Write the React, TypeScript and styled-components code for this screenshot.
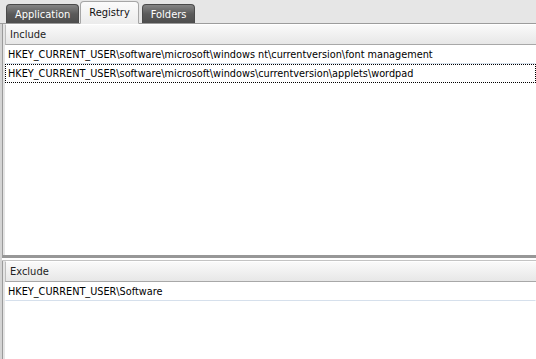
import * as React from 'react';
import styled, { createGlobalStyle } from 'styled-components';

const GlobalStyle = createGlobalStyle`
    html, body {
        margin: 0;
        padding: 0;
        background: #ffffff;
    }
    body {
        font-family: Tahoma, "DejaVu Sans Condensed", "Liberation Sans", sans-serif;
    }
`;

const Window = styled.div`
    width: 536px;
    height: 359px;
    display: flex;
    flex-direction: column;
    overflow: hidden;
    background: #ffffff;
`;

const TabStrip = styled.div`
    height: 23px;
    display: flex;
    align-items: flex-end;
    gap: 1px;
    padding-left: 6px;
    background: #e6e6e6;
    border-bottom: 1px solid #9c9c9c;
`;

const Tab = styled.div<{ active?: boolean }>`
    box-sizing: border-box;
    height: ${(p) => (p.active ? '23px' : '19px')};
    margin-bottom: ${(p) => (p.active ? '-1px' : '0')};
    margin-right: ${(p) => (p.active ? '2px' : '0')};
    padding: 0 ${(p) => (p.active ? '8px' : '8px')};
    display: flex;
    align-items: center;
    font-size: 11px;
    color: ${(p) => (p.active ? '#111111' : '#ffffff')};
    background: ${(p) => (p.active
        ? 'linear-gradient(#fbfbfb, #ececec)'
        : 'linear-gradient(#858585, #5a5a5a 50%, #4e4e4e)')};
    border: 1px solid ${(p) => (p.active ? '#a6a6a6' : '#4a4a4a')};
    border-bottom: ${(p) => (p.active ? '1px solid #ececec' : 'none')};
    border-radius: 4px 4px 0 0;
`;

const Body = styled.div`
    flex: 1;
    display: flex;
    flex-direction: column;
    border-left: 2px solid #d4d4d4;
    box-shadow: inset 1px 0 0 #9a9a9a, inset 3px 0 0 #e4e4e4;
    padding-left: 4px;
`;

const Section = styled.div<{ height?: number }>`
    ${(p) => (p.height ? `height: ${p.height}px;` : 'flex: 1;')}
    display: flex;
    flex-direction: column;
    background: #ffffff;
`;

const Header = styled.div`
    height: 21px;
    box-sizing: border-box;
    display: flex;
    align-items: center;
    padding-left: 4px;
    margin-left: -1px;
    font-size: 11px;
    color: #222222;
    background: linear-gradient(#fafafa, #e7e7e7);
    border-top: 1px solid #ffffff;
    border-left: 1px solid #bdbdbd;
    border-bottom: 1px solid #a8a8a8;
`;

const Row = styled.div<{ focused?: boolean }>`
    height: 19px;
    box-sizing: border-box;
    display: flex;
    align-items: center;
    padding-left: 2px;
    font-size: 10.8px;
    color: #000000;
    white-space: nowrap;
    border: 1px dotted ${(p) => (p.focused ? '#000000' : 'transparent')};
    border-bottom: 1px ${(p) => (p.focused ? 'dotted #000000' : 'solid #d6e0ec')};
    margin-left: -1px;
`;

const Splitter = styled.div`
    height: 6px;
    margin-left: -4px;
    background: #ffffff;
    border-top: 3px solid #979797;
    border-bottom: 1px solid #c4c4c4;
    box-sizing: border-box;
`;

const includeKeys = [
    'HKEY_CURRENT_USER\\software\\microsoft\\windows nt\\currentversion\\font management',
    'HKEY_CURRENT_USER\\software\\microsoft\\windows\\currentversion\\applets\\wordpad',
];

const excludeKeys = ['HKEY_CURRENT_USER\\Software'];

export default function App() {
    return (
        <Window>
            <GlobalStyle />
            <TabStrip>
                <Tab>Application</Tab>
                <Tab active>Registry</Tab>
                <Tab>Folders</Tab>
            </TabStrip>
            <Body>
                <Section height={231}>
                    <Header>Include</Header>
                    {includeKeys.map((key, index) => (
                        <Row key={key} focused={index === 1}>{key}</Row>
                    ))}
                </Section>
                <Splitter />
                <Section>
                    <Header>Exclude</Header>
                    {excludeKeys.map((key) => (
                        <Row key={key}>{key}</Row>
                    ))}
                </Section>
            </Body>
        </Window>
    );
}
